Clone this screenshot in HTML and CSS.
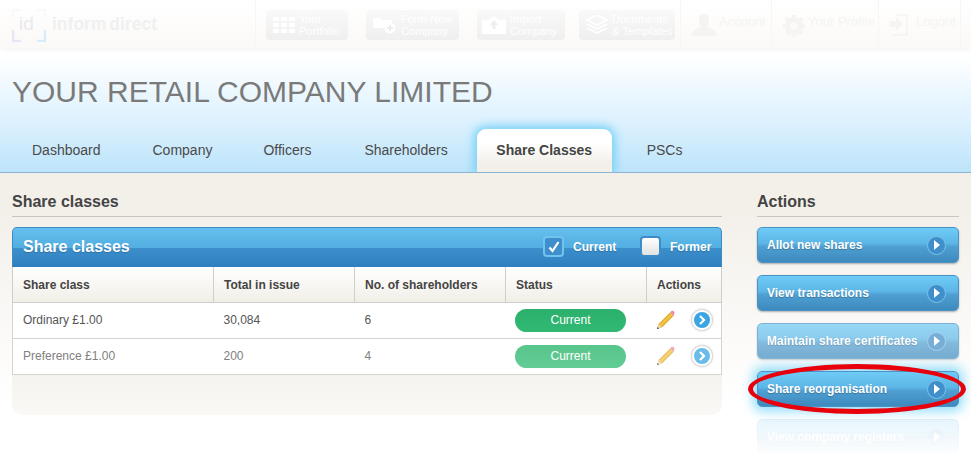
FILE: index.html
```html
<!DOCTYPE html>
<html>
<head>
<meta charset="UTF-8">
<title>Share classes</title>
<link rel="stylesheet" href="styles.css">
</head>
<body>

<!-- top bar, faded out in the shot -->
<div class="topbar">
	<div class="logo">
		<svg class="logoMark" width="34" height="34" viewBox="0 0 34 34">
			<path d="M1 22v11h8" fill="none" stroke="#e9e4f4" stroke-width="2.5"/>
			<path d="M33 22v11h-8" fill="none" stroke="#d6eef9" stroke-width="2.5"/>
			<path d="M1 10V2h8M33 10V2h-8" fill="none" stroke="#f8f8f8" stroke-width="2"/>
		</svg>
		<span class="logoId">id</span>
		<span class="logoText">inform direct</span>
	</div>
	<div class="navBtn nb1">
		<svg width="22" height="16" viewBox="0 0 22 16"><path d="M0 0h6v4H0zM8 0h6v4H8zM16 0h6v4h-6zM0 6h6v4H0zM8 6h6v4H8zM16 6h6v4h-6zM0 12h6v4H0zM8 12h6v4H8zM16 12h6v4h-6z" fill="#fff"/></svg>
		<span>Your<br>Portfolio</span>
	</div>
	<div class="navBtn nb2">
		<svg width="24" height="18" viewBox="0 0 24 18"><path d="M0 2h7l2 2h10v8H0z" fill="#fff"/><circle cx="17" cy="12" r="5.5" fill="#fff"/><path d="M14 12h6M17 9v6" stroke="#eee" stroke-width="2"/></svg>
		<span>Form New<br>Company</span>
	</div>
	<div class="navBtn nb3">
		<svg width="24" height="18" viewBox="0 0 24 18"><path d="M0 4h7l5-4 5 4h7v14H0z" fill="#fff"/><path d="M12 4l4 5h-2.500v4h-3V9H8z" fill="#eee"/></svg>
		<span>Import<br>Company</span>
	</div>
	<div class="navBtn nb4">
		<svg width="22" height="20" viewBox="0 0 22 20"><path d="M11 0l10 5-10 5L1 5zM1 9l10 5 10-5M1 13l10 5 10-5" fill="none" stroke="#fff" stroke-width="1.800"/></svg>
		<span>Documents<br>&amp; Templates</span>
	</div>
	<div class="userLink ul1">
		<svg width="26" height="22" viewBox="0 0 26 22"><path d="M13 0c4 0 5 3 5 6s-1 5-2 7c3 2 10 3 10 9H0c0-6 7-7 10-9-1-2-2-4-2-7s1-6 5-6z" fill="#f5f4f2"/></svg>
		<span>Account</span>
	</div>
	<div class="userLink ul2">
		<svg width="24" height="24" viewBox="0 0 24 24"><circle cx="12" cy="12" r="6.500" fill="none" stroke="#f5f4f2" stroke-width="5"/><path d="M12 1v22M1 12h22M4 4l16 16M20 4L4 20" stroke="#f5f4f2" stroke-width="3.500"/><circle cx="12" cy="12" r="3.500" fill="#fcfbfa"/></svg>
		<span>Your Profile</span>
	</div>
	<div class="userLink ul3">
		<svg width="18" height="22" viewBox="0 0 18 22"><path d="M6 1h11v20H3" fill="none" stroke="#f5f4f2" stroke-width="1.500"/><path d="M0 7h6V3l7 7-7 7v-4H0z" fill="#f5f4f2"/></svg>
		<span>Logout</span>
	</div>
</div>

<div class="hero">
	<h1>YOUR RETAIL COMPANY LIMITED</h1>
	<div class="tabs">
		<a class="tab t1">Dashboard</a>
		<a class="tab t2">Company</a>
		<a class="tab t3">Officers</a>
		<a class="tab t4">Shareholders</a>
		<a class="tab active">Share Classes</a>
		<a class="tab t6">PSCs</a>
	</div>
</div>

<div class="content">
	<div class="main">
		<h2>Share classes</h2>
		<div class="panel">
			<div class="panelHead">
				<span class="panelTitle">Share classes</span>
				<span class="filter f1">
					<span class="chk on">
						<svg width="14" height="14" viewBox="0 0 14 14"><path d="M2.500 7.500l3 3.500L11.500 2" fill="none" stroke="#fff" stroke-width="2.200"/></svg>
					</span>
					Current
				</span>
				<span class="filter f2">
					<span class="chk"></span>
					Former
				</span>
			</div>
			<table>
				<tr>
					<th class="c1">Share class</th>
					<th class="c2">Total in issue</th>
					<th class="c3">No. of shareholders</th>
					<th class="c4">Status</th>
					<th class="c5">Actions</th>
				</tr>
				<tr>
					<td>Ordinary £1.00</td>
					<td>30,084</td>
					<td>6</td>
					<td><span class="pill">Current</span></td>
					<td class="acts">
						<svg class="pencil" width="22" height="20" viewBox="0 0 20 20"><path d="M1 19l1.500-5L14 2.500 17.500 6 6 17.500z" fill="#f5c242"/><path d="M3 14.500L14.500 3M5.500 17L17 5.500" stroke="#c9902a" stroke-width=".7"/><path d="M14 2.500l1.500-1.500c1-.6 2-.2 2.500.5s.8 1.700.2 2.500L17.500 6z" fill="#e88f9c"/><path d="M1 19l1.500-5 3.500 3.500z" fill="#e8d5b0"/><path d="M1 19l.6-2 1.400 1.400z" fill="#333"/></svg>
						<span class="go"><svg width="16" height="16" viewBox="0 0 16 16"><circle cx="8" cy="8" r="8" fill="#3aa5e2"/><path d="M6 4l4 4-4 4" fill="none" stroke="#fff" stroke-width="2.200"/></svg></span>
					</td>
				</tr>
				<tr class="dim">
					<td>Preference £1.00</td>
					<td>200</td>
					<td>4</td>
					<td><span class="pill">Current</span></td>
					<td class="acts">
						<svg class="pencil" width="22" height="20" viewBox="0 0 20 20"><path d="M1 19l1.500-5L14 2.500 17.500 6 6 17.500z" fill="#f5c242"/><path d="M3 14.500L14.500 3M5.500 17L17 5.500" stroke="#c9902a" stroke-width=".7"/><path d="M14 2.500l1.500-1.500c1-.6 2-.2 2.500.5s.8 1.700.2 2.500L17.500 6z" fill="#e88f9c"/><path d="M1 19l1.500-5 3.500 3.500z" fill="#e8d5b0"/><path d="M1 19l.6-2 1.400 1.400z" fill="#333"/></svg>
						<span class="go"><svg width="16" height="16" viewBox="0 0 16 16"><circle cx="8" cy="8" r="8" fill="#3aa5e2"/><path d="M6 4l4 4-4 4" fill="none" stroke="#fff" stroke-width="2.200"/></svg></span>
					</td>
				</tr>
			</table>
		</div>
	</div>

	<div class="side">
		<h2>Actions</h2>
		<a class="action">Allot new shares <span class="arrow"></span></a>
		<a class="action">View transactions <span class="arrow"></span></a>
		<a class="action faded">Maintain share certificates <span class="arrow"></span></a>
		<a class="action glow">Share reorganisation <span class="arrow"></span>
			<span class="ring"></span>
		</a>
		<a class="action ghost">View company registers <span class="arrow"></span></a>
	</div>
</div>

</body>
</html>
```

FILE: styles.css
```css
* {box-sizing: border-box;}
html, body {margin: 0; height: 470px; overflow: hidden;}
body {background: #fff; font-family: "Liberation Sans", Arial, sans-serif; color: #444;}

.topbar {display: flex; height: 48px; align-items: stretch; background: linear-gradient(#fff, #fbf9f7); box-shadow: 0 1px 5px rgba(0,0,0,.06); position: relative;}
.logo {width: 256px; display: flex; align-items: center; padding-left: 12px; border-right: 1px solid #f8f6f4;}
.logoMark {flex: none; margin-top: 2px;}
.logoId {margin-left: -27px; width: 25px; font-size: 19px; color: #e9e9eb;}
.logoText {margin-left: 8px; font-size: 17.500px; font-weight: bold; color: #f0f0f0; letter-spacing: 0; word-spacing: -2px;}
.navBtn {height: 30px; margin-top: 10px; border-radius: 4px; background: linear-gradient(#f9f9f9, #efefef); display: flex; align-items: center; gap: 4px; padding-left: 7px; font-size: 11px; line-height: 12px; color: #fff;}
.nb1 {margin-left: 10px; width: 82px;}
.nb2 {margin-left: 18px; width: 93px;}
.nb3 {margin-left: 18px; width: 88px; padding-left: 5px;}
.nb4 {margin-left: 14px; width: 96px; white-space: nowrap;}
.userLink {display: flex; gap: 2px; padding-top: 14px; font-size: 13px; color: #f5f4f2; border-left: 1px solid #f8f6f4;}
.ul1 {margin-left: 5px; width: 91px; padding-left: 10px;}
.ul2 {width: 107px; padding-left: 10px;}
.ul3 {width: 83px; padding-left: 11px; gap: 8px; border-right: 1px solid #f8f6f4;}

.hero {height: 125px; background: linear-gradient(#fff 0, #fff 8px, #e6f5fe 55px, #dff2fe 70px, #bde4fb 124px); border-bottom: 1px solid #8fb4cf;}
h1 {margin: 0; padding: 26px 0 0 12px; height: 80px; font-size: 30px; line-height: 36px; font-weight: normal; color: #7a7a7a;}
.tabs {display: flex; height: 45px; align-items: flex-start;}
.tab {font-size: 14px; line-height: 16px; padding-top: 14px; color: #4a4a4a;}
.t1 {margin-left: 32px;}
.t2 {margin-left: 52px;}
.t3 {margin-left: 51px;}
.t4 {margin-left: 53px;}
.t6 {margin-left: 35px;}
.tab.active {margin: 1px 0 0 29px; padding-top: 13px; width: 135px; height: 43px; text-align: center; font-weight: bold; color: #444; border-radius: 9px 9px 0 0; background: linear-gradient(#fff 0, #fff 14px, #f3f0ea 34px); box-shadow: 0 0 10px 3px #74d0f6; clip-path: inset(-20px -20px 0 -20px);}

.content {display: flex; height: 297px; background: linear-gradient(#f3f0ea 0, #f3f0ea 40px, #fbf9f7 150px, #fff 230px); padding: 0 12px;}
.main {width: 710px;}
.side {width: 202px; margin-left: 35px;}
h2 {margin: 0; padding-top: 20px; height: 44px; border-bottom: 1px solid #c9c5bd; font-size: 16px; line-height: 18px; font-weight: bold; color: #444;}

.panel {margin-top: 10px; border-radius: 0 0 10px 10px; background: linear-gradient(#f5f3ee 0, #f5f3ee 148px, #faf9f6 100%); height: 188px;}
.panelHead {height: 40px; display: flex; align-items: center; padding: 0 0 2px 10px; color: #fff; font-size: 12px; font-weight: bold; border-radius: 5px 5px 0 0; border: 1px solid #3d8ac4; border-bottom: 0; background: linear-gradient(#65c0ee 0, #53aee2 50%, #3b8fcb 52%, #2f7fbf 100%); text-shadow: 0 1px 1px rgba(0,0,0,.2);}
.panelTitle {font-size: 16px; width: 520px;}
.filter {display: flex; align-items: center; gap: 9px;}
.f1 {width: 97px;}
.chk {width: 21px; height: 21px; border-radius: 4px; display: flex; align-items: center; justify-content: center; flex: none; border: 2px solid #3d8cc8; background: linear-gradient(#fff, #e2e2e2);}
.chk.on {border-color: #72c2ee; background: #3f8fcd;}

table {width: 710px; border-collapse: collapse; background: #fff; font-size: 12px;}
th, td {text-align: left; padding: 0 0 0 10px; border: 1px solid #d6d4d0; height: 36px; font-size: 12px;}
td {border-left: 0; border-right: 0; color: #555;}
td:first-child {border-left: 1px solid #d6d4d0;}
td:last-child {border-right: 1px solid #d6d4d0;}
th {height: 35px; padding-top: 2px; font-weight: bold; color: #444; background: linear-gradient(#fff, #f1eee7); border-color: #d0cec9; border-top: 0;}
.c1 {width: 201px;}
.c2 {width: 141px;}
.c3 {width: 151px;}
.c4 {width: 141px;}
.dim td {color: #808080;}
.pill {display: block; margin-left: -1px; padding-left: 1px; width: 111px; height: 23px; border-radius: 12px; background: linear-gradient(#2bb06b, #31b973); color: #fff; text-align: center; line-height: 22px; font-size: 12px;}
.dim .pill {background: linear-gradient(#58c58b, #62cc94);}
.dim .go svg, .dim .pencil {opacity: .75;}
.acts {padding-left: 8px;}
.acts svg {vertical-align: middle;}
.go {display: inline-flex; width: 22px; height: 22px; margin-left: 11px; border-radius: 50%; background: #fff; border: 1px solid #dcdcdc; box-shadow: 0 0 2px rgba(0,0,0,.2); align-items: center; justify-content: center; vertical-align: middle;}

.action {display: flex; align-items: center; justify-content: space-between; height: 36px; margin-top: 10px; margin-bottom: 12px; padding: 0 12px 0 9px; font-size: 12px; font-weight: bold; color: #fff; border-radius: 5px; border: 1px solid #4a93c8; background: linear-gradient(#6ecbf6 0, #5cb6e6 45%, #4f9fd3 55%, #3d8abd 100%); box-shadow: 0 1px 2px rgba(0,0,0,.3); text-shadow: 0 1px 1px rgba(0,0,0,.25); position: relative;}
.arrow {width: 19px; height: 19px; border-radius: 50%; background: #3f8fca; border: 1px solid #7cc0ea; position: relative; flex: none;}
.arrow::after {content: ""; position: absolute; left: 6px; top: 3.500px; border-left: 6px solid #fff; border-top: 5px solid transparent; border-bottom: 5px solid transparent;}
.faded {opacity: .7;}
.glow {box-shadow: 0 0 12px 4px #8edcf9;}
.ghost {opacity: .16; box-shadow: none; -webkit-mask-image: linear-gradient(#000, transparent); mask-image: linear-gradient(#000, transparent);}
.ring {position: absolute; left: -10px; top: -8px; width: 218px; height: 50px; border: 5px solid #e8000b; border-radius: 50%;}
```
